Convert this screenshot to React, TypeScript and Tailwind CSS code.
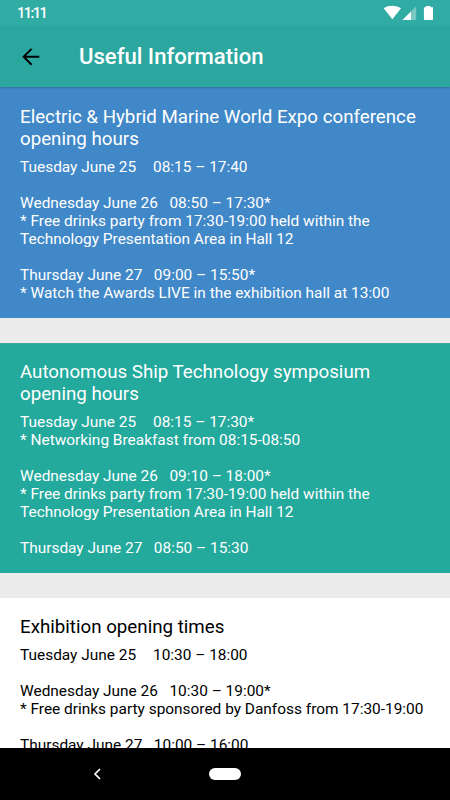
type Section = { title: string; body: string; box: string };

const sections: Section[] = [
  {
    title: 'Electric & Hybrid Marine World Expo conference opening hours',
    body: `Tuesday June 25    \u200a08:15 – 17:40

Wednesday June 26   08:50 – 17:30*
* Free drinks party from 17:30-19:00 held within the Technology Presentation Area in Hall 12

Thursday June 27   09:00 – 15:50*
* Watch the Awards LIVE in the exhibition hall at 13:00`,
    box: 'h-[231px] pt-[19px] bg-[#4188c8] text-white',
  },
  {
    title: 'Autonomous Ship Technology symposium opening hours',
    body: `Tuesday June 25    \u200a08:15 – 17:30*
* Networking Breakfast from 08:15-08:50

Wednesday June 26   09:10 – 18:00*
* Free drinks party from 17:30-19:00 held within the Technology Presentation Area in Hall 12

Thursday June 27   08:50 – 15:30`,
    box: 'h-[230px] pt-[17px] border-t border-[#3aa69c] bg-[#24a99d] text-white',
  },
  {
    title: 'Exhibition opening times',
    body: `Tuesday June 25    \u200a10:30 – 18:00

Wednesday June 26   10:30 – 19:00*
* Free drinks party sponsored by Danfoss from 17:30-19:00

Thursday June 27   10:00 – 16:00`,
    box: 'flex-1 pt-[18px] bg-white text-black',
  },
];

function StatusBar() {
  return (
    <div className="h-[26px] shrink-0 bg-[#31aca4] flex items-center justify-between pl-[17px] pr-[16px] text-white">
      <span className="pt-[1px] text-[14.5px] font-medium leading-[26px] tracking-[-1.5px]">11:11</span>
      <svg width="50" height="26" viewBox="0 0 50 26" fill="currentColor">
        <path d="M-0.3 8.3C4.8 4.8 12 4.8 17 8.3L8.4 19.2Z" />
        <path d="M32.2 6.2V20H18.5Z" opacity="0.35" />
        <path d="M27 11.4V20H18.5Z" />
        <path d="M42 6H46.6V7.2H49V19.2Q49 20 48.2 20H40.7Q39.9 20 39.9 19.2V7.2H42Z" />
      </svg>
    </div>
  );
}

function Header() {
  return (
    <div className="h-[61px] shrink-0 bg-[#2ca79f] flex items-center pl-[20px] shadow-[0_1px_2px_rgba(0,0,0,0.2)] z-10">
      <svg width="22" height="22" viewBox="0 0 22 22" fill="none" stroke="black" strokeWidth="1.9">
        <path d="M19.3 10.8H3.5M11.6 2.9L3.6 10.8L11.6 18.7" />
      </svg>
      <h1 className="ml-[37px] pt-[1px] text-[22.1px] font-medium text-white">Useful Information</h1>
    </div>
  );
}

function InfoCard({ title, body, box }: Section) {
  return (
    <section className={`shrink-0 px-[20px] ${box}`}>
      <h2 className="text-[18.73px] leading-[22px]">{title}</h2>
      <p className="mt-[9px] text-[15.43px] leading-[17.95px] whitespace-pre-wrap">{body}</p>
    </section>
  );
}

export default function App() {
  return (
    <div className="w-[450px] h-[800px] flex flex-col overflow-hidden bg-[#ececec] font-['Roboto',sans-serif]">
      <StatusBar />
      <Header />
      <main className="flex-1 min-h-0 overflow-hidden flex flex-col gap-[25px]">
        {sections.map((s) => (
          <InfoCard key={s.title} {...s} />
        ))}
      </main>
      <nav className="h-[52px] shrink-0 bg-black flex items-center pl-[93px] z-10">
        <svg width="9" height="12" viewBox="0 0 9 12" fill="none" stroke="white" strokeWidth="1.7">
          <path d="M7 1L2 6L7 11" />
        </svg>
        <div className="ml-[107px] w-[32px] h-[12px] rounded-full bg-white" />
      </nav>
    </div>
  );
}
